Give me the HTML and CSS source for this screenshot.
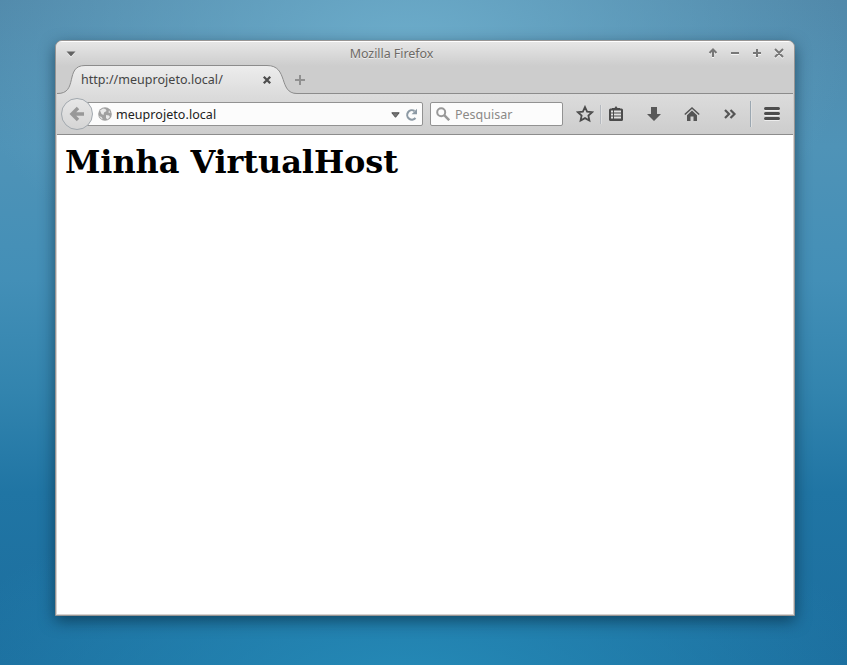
FILE: index.html
```html
<!DOCTYPE html>
<html lang="pt-BR">
<head>
<meta charset="utf-8">
<title>Mozilla Firefox</title>
<link rel="stylesheet" href="styles.css">
</head>
<body>
<div class="window">
  <header class="titlebar">
    <svg class="window-menu" width="10" height="8" viewBox="0 0 10 8"><path d="M1 2.500h8L5 7.500z" fill="#fff"/><path d="M.5 1.500h9L5 6.500z" fill="#636363"/></svg>
    <span class="window-title">Mozilla Firefox</span>
    <svg class="window-buttons" width="80" height="12" viewBox="0 0 80 12">
      <g fill="none" stroke="#f4f4f4" stroke-width="2" transform="translate(0 1)"><path d="M7 9V3M3.500 5L7 1.500L10.500 5M25 5h8M47 5h8M51 1v8M69 1l8 8M77 1l-8 8"/></g>
      <g fill="none" stroke="#777" stroke-width="2"><path d="M7 9V3M3.500 5L7 1.500L10.500 5M25 5h8M47 5h8M51 1v8M69 1l8 8M77 1l-8 8"/></g>
    </svg>
  </header>
  <nav class="tabs">
    <div class="tab">
      <svg class="tab-shape" width="240" height="30" viewBox="0 0 240 30">
        <defs><linearGradient id="tabFill" x1="0" y1="0" x2="0" y2="1"><stop offset="0" stop-color="#ededed"/><stop offset="1" stop-color="#dcdcdc"/></linearGradient></defs>
        <path d="M0 28.500C22 29 7 .5 28 .5H210C232 .5 221 28.500 240 28.500V30H0z" fill="url(#tabFill)"/>
        <path d="M0 28.500C22 29 7 .5 28 .5H210C232 .5 221 28.500 240 28.500" fill="none" stroke="#8c8c8c"/>
      </svg>
      <span class="tab-label">http://meuprojeto.local/</span>
      <svg class="tab-close" width="10" height="10" viewBox="0 0 10 10"><path d="M1.800 1.800l6.400 6.400M8.200 1.800l-6.400 6.400" stroke="#4d4d4d" stroke-width="2.300"/></svg>
    </div>
    <svg class="new-tab" width="12" height="12" viewBox="0 0 12 12"><path d="M6 1v10M1 6h10" stroke="#909090" stroke-width="2"/></svg>
  </nav>
  <div class="toolbar">
    <div class="back">
      <svg width="16" height="16" viewBox="0 0 16 16"><path d="M9 2L3 8l6 6M3 8h12" fill="none" stroke="#989898" stroke-width="3.500"/></svg>
    </div>
    <div class="address">
      <svg width="14" height="14" viewBox="0 0 14 14"><circle cx="7" cy="7" r="6.800" fill="#a0a0a0"/><path d="M2 3.500L5 1.500 7.500 2 8.500 4 6 5.500 5.500 8 3.500 7zM11 3l1.500 3-2-.5zM1 9l2.500 1 1.500 2.500L3 11.500zM8 8l3 .5 1 1.500-2.500 2.500L8 11z" fill="#e9e9e9"/></svg>
      <span class="address-text">meuprojeto.local</span>
      <svg class="history" width="9" height="6" viewBox="0 0 9 6"><path d="M.8 .8h7.400L4.500 5.300z" fill="#777" stroke="#4e4e4e"/></svg>
      <svg class="reload" width="13" height="13" viewBox="0 0 13 13"><path d="M9.500 3A4.700 4.700 0 1 0 10.500 10" fill="none" stroke="#8d9aa5" stroke-width="2.100"/><path d="M12 .8V6.200H6.600z" fill="#8d9aa5"/></svg>
    </div>
    <div class="search">
      <svg width="14" height="14" viewBox="0 0 14 14"><circle cx="5.200" cy="5.200" r="4" fill="none" stroke="#999" stroke-width="2"/><path d="M8.200 8.200l5 5" stroke="#999" stroke-width="2.500"/></svg>
      <span>Pesquisar</span>
    </div>
    <div class="actions">
      <svg width="18" height="18" viewBox="0 0 18 18"><path d="M9 2l2.100 4.600 5 .6-3.700 3.400 1 5L9 13.100 4.600 15.600l1-5L1.900 7.200l5-.6z" fill="none" stroke="#4c4c4c" stroke-width="1.800"/></svg>
      <i class="divider"></i>
      <svg width="16" height="16" viewBox="0 0 16 16"><path d="M4 3V2h2.500L8 0l1.500 2H12v1z" fill="#4b4b4b"/><rect x="1" y="2.500" width="14" height="12.500" rx="1.500" fill="#4b4b4b"/><path d="M3 5.500h2M6 5.500h7M3 8.500h2M6 8.500h7M3 11.500h2M6 11.500h7" stroke="#e2e2e2" stroke-width="2"/></svg>
      <svg width="16" height="16" viewBox="0 0 16 16"><path d="M5 1h6v7h4l-7 7-7-7h4z" fill="#585858"/></svg>
      <svg width="16" height="16" viewBox="0 0 16 16"><path d="M.8 8.500L8 2l7.200 6.500" fill="none" stroke="#555" stroke-width="1.600"/><path d="M3 9.200l5-4.600 5 4.600V15H9.500v-4.500H6.500V15H3z" fill="#555"/></svg>
      <svg width="16" height="16" viewBox="0 0 16 16"><path d="M3 4l4 4-4 4M8.500 4l4 4-4 4" fill="none" stroke="#555" stroke-width="2.200"/></svg>
      <i class="divider tall"></i>
      <svg width="16" height="16" viewBox="0 0 16 16"><path d="M1.500 3.500h13M1.500 8.500h13M1.500 13.500h13" stroke="#fff" stroke-width="3" stroke-linecap="round" opacity=".6"/><path d="M1.500 2.500h13M1.500 7.500h13M1.500 12.500h13" stroke="#4d4d4d" stroke-width="3" stroke-linecap="round"/></svg>
    </div>
  </div>
  <main class="page"><h1>Minha VirtualHost</h1></main>
</div>
</body>
</html>
```
FILE: styles.css
```css
* { box-sizing: border-box; }
body {
  margin: 0;
  height: 665px;
  overflow: hidden;
  padding: 40px 52px 49px 55px;
  font: 12.5px "Noto Sans", sans-serif;
  background:
    radial-gradient(ellipse 480px 200px at 48% 103%, #258ab7, rgba(37, 138, 183, 0)),
    radial-gradient(ellipse 440px 260px at 48% 8%, #6dadcb, rgba(95, 163, 197, 0)),
    linear-gradient(#5189aa 0, #4f93b7 22%, #438fb7 42%, #3284ae 59%, #2075a4 74%, #1c6e9e 100%);
}
svg { display: block; flex: none; }
.window {
  display: flex;
  flex-direction: column;
  width: 740px;
  height: 576px;
  border: 1px solid #979594;
  border-radius: 7px 7px 0 0;
  background: #cdcdcd;
  box-shadow: 0 5px 15px rgba(0, 28, 43, .55);
  overflow: hidden;
}
.titlebar {
  display: grid;
  grid-template-columns: 10px 1fr 80px;
  align-items: center;
  height: 25px;
  padding: 0 8px 0 10px;
  border-top: 1px solid #fff;
  background: linear-gradient(#e6e6e6, #cdcdcd);
}
.window-title { margin-top: -1px; padding-left: 1px; color: #6e6a66; line-height: 16px; letter-spacing: -.05px; text-align: center; text-shadow: 0 1px #eee; }
.tabs { display: flex; align-items: center; height: 28px; margin: 0 1px; border-bottom: 1px solid #8c8c8c; }
.tab { position: relative; display: flex; align-items: center; width: 240px; height: 29px; padding: 0 24px; margin-bottom: -1px; }
.tab-shape { position: absolute; left: 0; bottom: 0; }
.tab-label { position: relative; width: 181px; margin-top: -2px; color: #444; letter-spacing: .03px; }
.tab-close { position: relative; }
.new-tab { margin-left: -3px; }
.toolbar {
  display: flex;
  align-items: center;
  height: 41px;
  margin: 0 1px;
  padding-left: 4px;
  border-bottom: 1px solid #8c8c8c;
  background: linear-gradient(#dcdcdc, #cdcdcd);
}
.back {
  position: relative;
  display: flex;
  align-items: center;
  justify-content: center;
  width: 32px;
  height: 32px;
  border: 1px solid #a1a8ae;
  border-radius: 50%;
  background: linear-gradient(#e7e7e7, #d5d5d5);
}
.address, .search {
  display: flex;
  align-items: center;
  height: 24px;
  border: 1px solid #929292;
  border-radius: 2px;
  background: #fcfcfc;
}
.address { width: 346px; margin-left: -16px; padding: 0 4px 0 20px; color: #222; }
.address-text { flex: 1; padding-left: 4px; letter-spacing: .05px; }
.history { margin-top: 2px; }
.reload { margin-left: 5px; }
.search { width: 133px; margin-left: 7px; padding-left: 5px; color: #8b8987; }
.search span { padding-left: 5px; }
.actions { display: grid; grid-template-columns: 30px 8px 16px 38px 38px 38px 14px 28px; align-items: center; justify-items: end; margin-left: 7px; }
.actions > svg:first-child { justify-self: center; }
.divider { justify-self: start; width: 2px; height: 19px; border-left: 1px solid #b5b9bf; border-right: 1px solid #e0e0e0; }
.tall { justify-self: end; height: 26px; border-left-color: #9ba7b1; }
.page { flex: 1; padding: 8px; border: 1px solid #d6d2d0; border-top: 0; background: #fff; }
h1 { margin: 0; color: #000; font: bold 32px/38px "DejaVu Serif", serif; letter-spacing: -.1px; }
```
